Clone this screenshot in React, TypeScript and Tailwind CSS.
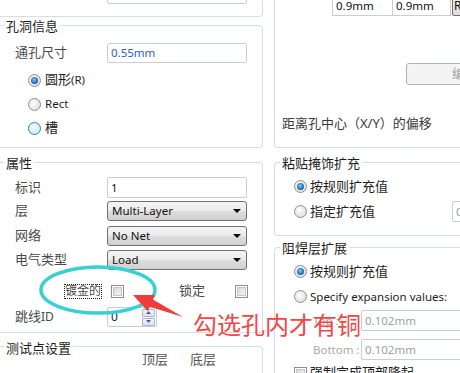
import type { ReactNode } from 'react';

function Radio({ checked = false, hover = false }: { checked?: boolean; hover?: boolean }) {
  return (
    <span
      className={`flex h-[13px] w-[13px] shrink-0 items-center justify-center rounded-full border ${
        hover
          ? 'border-[#3c7fb1] bg-[radial-gradient(circle_at_40%_40%,#f2fafe,#bfe4f8)]'
          : 'border-[#8e8f8f] bg-[radial-gradient(circle_at_40%_40%,#ffffff,#d4d4d4)]'
      }`}
    >
      {checked && (
        <span className="h-[7px] w-[7px] rounded-full bg-[radial-gradient(circle_at_45%_40%,#7fd0ff,#1f74bb_55%,#0d3e78)]" />
      )}
    </span>
  );
}

function Checkbox() {
  return (
    <span className="flex h-[13px] w-[13px] shrink-0 items-center justify-center border border-[#8f8f8f] bg-white">
      <span className="h-[9px] w-[9px] border border-[#c5c5c5] bg-[linear-gradient(135deg,#d8d8d8,#f6f6f6)]" />
    </span>
  );
}

function TextBox({ value, className = '', text = 'text-[#111]' }: { value: string; className?: string; text?: string }) {
  return (
    <div className={`flex shrink-0 items-center rounded-[2px] border border-[#c9ced4] bg-white pl-[3px] text-[11.5px] whitespace-nowrap ${text} ${className}`}>
      {value}
    </div>
  );
}

function Select({ value }: { value: string }) {
  return (
    <div className="flex h-[20px] w-[140px] shrink-0 items-center justify-between rounded-[3px] border border-[#707070] bg-[linear-gradient(#f4f4f4,#ebebeb_50%,#dedede_50%,#d0d0d0)] pl-[4px] pr-[5px] text-[11.5px] text-[#111]">
      <span>{value}</span>
      <svg width="8" height="4" viewBox="0 0 8 4">
        <path d="M0 0H8L4 4Z" fill="#000" />
      </svg>
    </div>
  );
}

function SpinBtn({ up = false }: { up?: boolean }) {
  return (
    <span className="flex h-[8px] w-[13px] items-center justify-center rounded-[1px] border border-[#a9b7c9] bg-[linear-gradient(#f3f7fc,#d9e4f1)]">
      <svg width="5" height="3" viewBox="0 0 5 3">
        <path d={up ? 'M0 3H5L2.5 0Z' : 'M0 0H5L2.5 3Z'} fill="#4d5f8f" />
      </svg>
    </span>
  );
}

function Title({ children, className = '-mt-[8px] leading-[16px]' }: { children: ReactNode; className?: string }) {
  return <div className={`w-fit bg-white px-[2px] text-[13px] text-[#1e1e1e] ${className}`}>{children}</div>;
}

function Label({ children }: { children: ReactNode }) {
  return <span className="w-[107px] shrink-0 pl-[15px] text-[13px] text-[#4a4a4a]">{children}</span>;
}

export default function App() {
  return (
    <div className="relative flex h-[373px] w-[460px] overflow-hidden bg-white font-['Noto_Sans','Noto_Sans_CJK_SC',sans-serif]">
      {/* left column */}
      <div className="flex w-[263px] shrink-0 flex-col">
        <div className="flex h-[17px] shrink-0 flex-col rounded-br-[4px] border-r border-b border-[#d5dde5]">
          <TextBox value="" className="-mt-[16px] ml-[107px] h-[20px] w-[140px]" />
        </div>

        {/* 孔洞信息 */}
        <div className="mt-[8px] flex shrink-0 flex-col rounded-r-[4px] border-y border-r border-[#d5dde5] pb-[7px]">
          <Title className="-mt-[8px] ml-[4px] leading-[16px]">孔洞信息</Title>
          <div className="mt-[9px] flex h-[20px] items-center">
            <Label>通孔尺寸</Label>
            <TextBox value="0.55mm" text="text-[#1f5fd1]" className="h-[20px] w-[140px]" />
          </div>
          <div className="mt-[5px] flex flex-col text-[13px] text-[#1e1e1e]">
            <div className="flex h-[24px] items-center gap-[4px] pl-[28px]">
              <Radio checked />
              <span>
                圆形<span className="text-[11.5px]">(R)</span>
              </span>
            </div>
            <div className="flex h-[24px] items-center gap-[4px] pl-[28px]">
              <Radio />
              <span className="text-[11.5px]">Rect</span>
            </div>
            <div className="flex h-[24px] items-center gap-[4px] pl-[28px]">
              <Radio hover />
              <span>槽</span>
            </div>
          </div>
        </div>

        {/* 属性 */}
        <div className="mt-[14px] flex shrink-0 flex-col rounded-r-[4px] border-y border-r border-[#d5dde5] pb-[5px]">
          <Title className="-mt-[8px] ml-[4px] leading-[16px]">属性</Title>
          <div className="mt-[6px] flex h-[21px] items-center">
            <Label>标识</Label>
            <TextBox value="1" className="h-[21px] w-[140px]" />
          </div>
          <div className="mt-[3px] flex h-[20px] items-center">
            <Label>层</Label>
            <Select value="Multi-Layer" />
          </div>
          <div className="mt-[5px] flex h-[20px] items-center">
            <Label>网络</Label>
            <Select value="No Net" />
          </div>
          <div className="mt-[4px] flex h-[20px] items-center">
            <Label>电气类型</Label>
            <Select value="Load" />
          </div>
          <div className="mt-[11px] flex h-[20px] items-center pl-[64px] text-[13px] text-[#4a4a4a]">
            <span className="flex h-[15px] w-[38px] shrink-0 items-center justify-center border border-dotted border-[#222] text-[12px] leading-none whitespace-nowrap">
              镀金的
            </span>
            <span className="ml-[9px]">
              <Checkbox />
            </span>
            <span className="ml-[55px] w-[26px] shrink-0 whitespace-nowrap">锁定</span>
            <span className="ml-[30px]">
              <Checkbox />
            </span>
          </div>
          <div className="mt-[6px] flex h-[20px] items-center">
            <Label>
              跳线<span className="text-[12px]">ID</span>
            </Label>
            <div className="flex h-[20px] w-[50px] items-center justify-between rounded-[2px] border border-[#c9ced4] bg-white pl-[3px] pr-[1px]">
              <span className="text-[12px] text-[#1b1b5e]">0</span>
              <div className="flex flex-col gap-[1px]">
                <SpinBtn up />
                <SpinBtn />
              </div>
            </div>
          </div>
        </div>

        {/* 测试点设置 */}
        <div className="mt-[13px] flex shrink-0 flex-col rounded-r-[4px] border-t border-r border-[#d5dde5] pb-[20px]">
          <Title className="-mt-[6px] ml-[4px] leading-[14px]">测试点设置</Title>
          <div className="-mt-[2px] flex h-[14px] items-center text-[13px] text-[#555]">
            <span className="ml-[142px] w-[48px]">顶层</span>
            <span>底层</span>
          </div>
        </div>
      </div>

      {/* right column */}
      <div className="ml-[11px] flex w-[240px] shrink-0 flex-col">
        <div className="flex shrink-0 flex-col rounded-bl-[4px] border-b border-l border-[#d5dde5] pb-[16px]">
          <div className="-mt-[5px] ml-[57px] flex h-[21px]">
            <TextBox value="0.9mm" className="h-[21px] w-[61px] rounded-none" />
            <TextBox value="0.9mm" className="h-[21px] w-[58px] rounded-none border-l-0" />
            <div className="ml-[1px] flex h-[21px] w-[30px] shrink-0 items-center rounded-[2px] border border-[#707070] bg-[linear-gradient(#f2f2f2,#dcdcdc)] pl-[1px] text-[12px] text-[#111]">
              R
            </div>
          </div>
          <div className="mt-[47px] ml-[131px] flex h-[22px] w-[170px] shrink-0 items-center rounded-[3px] border border-[#adb2b5] bg-[#f4f4f4] pl-[45px] text-[13px] whitespace-nowrap text-[#a3a3a3]">
            编辑全部焊盘层定义...
          </div>
          <div className="mt-[30px] ml-[7px] text-[13px] leading-[16px] whitespace-nowrap text-[#3a3a3a]">
            距离孔中心（X/Y）的偏移
          </div>
        </div>

        {/* 粘贴掩饰扩充 */}
        <div className="mt-[14px] flex shrink-0 flex-col rounded-l-[4px] border-y border-l border-[#d5dde5] pb-[11px] text-[13px] text-[#1e1e1e]">
          <Title className="-mt-[8px] ml-[5px] leading-[16px]">粘贴掩饰扩充</Title>
          <div className="mt-[3px] flex h-[25px] items-center gap-[3px] pl-[19px]">
            <Radio checked />
            <span>按规则扩充值</span>
          </div>
          <div className="flex h-[25px] items-center gap-[3px] pl-[19px]">
            <Radio />
            <span className="w-[139px] shrink-0">指定扩充值</span>
            <TextBox value="0.102mm" text="text-[#8f9bb5]" className="h-[21px] w-[60px]" />
          </div>
        </div>

        {/* 阻焊层扩展 */}
        <div className="mt-[11px] flex shrink-0 flex-col rounded-l-[4px] border-t border-l border-[#d5dde5] pb-[20px] text-[13px] text-[#1e1e1e]">
          <Title className="-mt-[8px] ml-[5px] leading-[16px]">阻焊层扩展</Title>
          <div className="mt-[3px] flex h-[25px] items-center gap-[3px] pl-[19px]">
            <Radio checked />
            <span>按规则扩充值</span>
          </div>
          <div className="flex h-[25px] items-center gap-[3px] pl-[19px]">
            <Radio />
            <span className="text-[11.5px] whitespace-nowrap">Specify expansion values:</span>
          </div>
          <div className="mt-[1px] flex h-[21px] items-center pl-[38px]">
            <span className="w-[48px] shrink-0 text-[11.5px] whitespace-nowrap text-[#a8a8a8]">Top :</span>
            <TextBox value="0.102mm" text="text-[#a0a0a0]" className="h-[21px] w-[120px]" />
          </div>
          <div className="mt-[8px] flex h-[21px] items-center pl-[38px]">
            <span className="w-[48px] shrink-0 text-[11.5px] whitespace-nowrap text-[#a8a8a8]">Bottom :</span>
            <TextBox value="0.102mm" text="text-[#a0a0a0]" className="h-[21px] w-[120px]" />
          </div>
          <div className="mt-[6px] flex h-[14px] items-center gap-[3px] pl-[19px]">
            <Checkbox />
            <span className="whitespace-nowrap">强制完成顶部隆起</span>
          </div>
        </div>
      </div>

      {/* annotation */}
      <svg className="pointer-events-none absolute top-0 left-0" width="460" height="373">
        <ellipse cx="98" cy="290" rx="57" ry="23" fill="none" stroke="#39cfd6" strokeWidth="3.5" />
        <polygon points="133,295 155,294.9 152.9,299.4 183,317 149.7,306.8 147.7,311.3" fill="#f03c3c" />
      </svg>
      <div className="pointer-events-none absolute top-[313px] left-[193px] text-[24px] leading-[24px] whitespace-nowrap text-[#f54545]">
        勾选孔内才有铜
      </div>
    </div>
  );
}
